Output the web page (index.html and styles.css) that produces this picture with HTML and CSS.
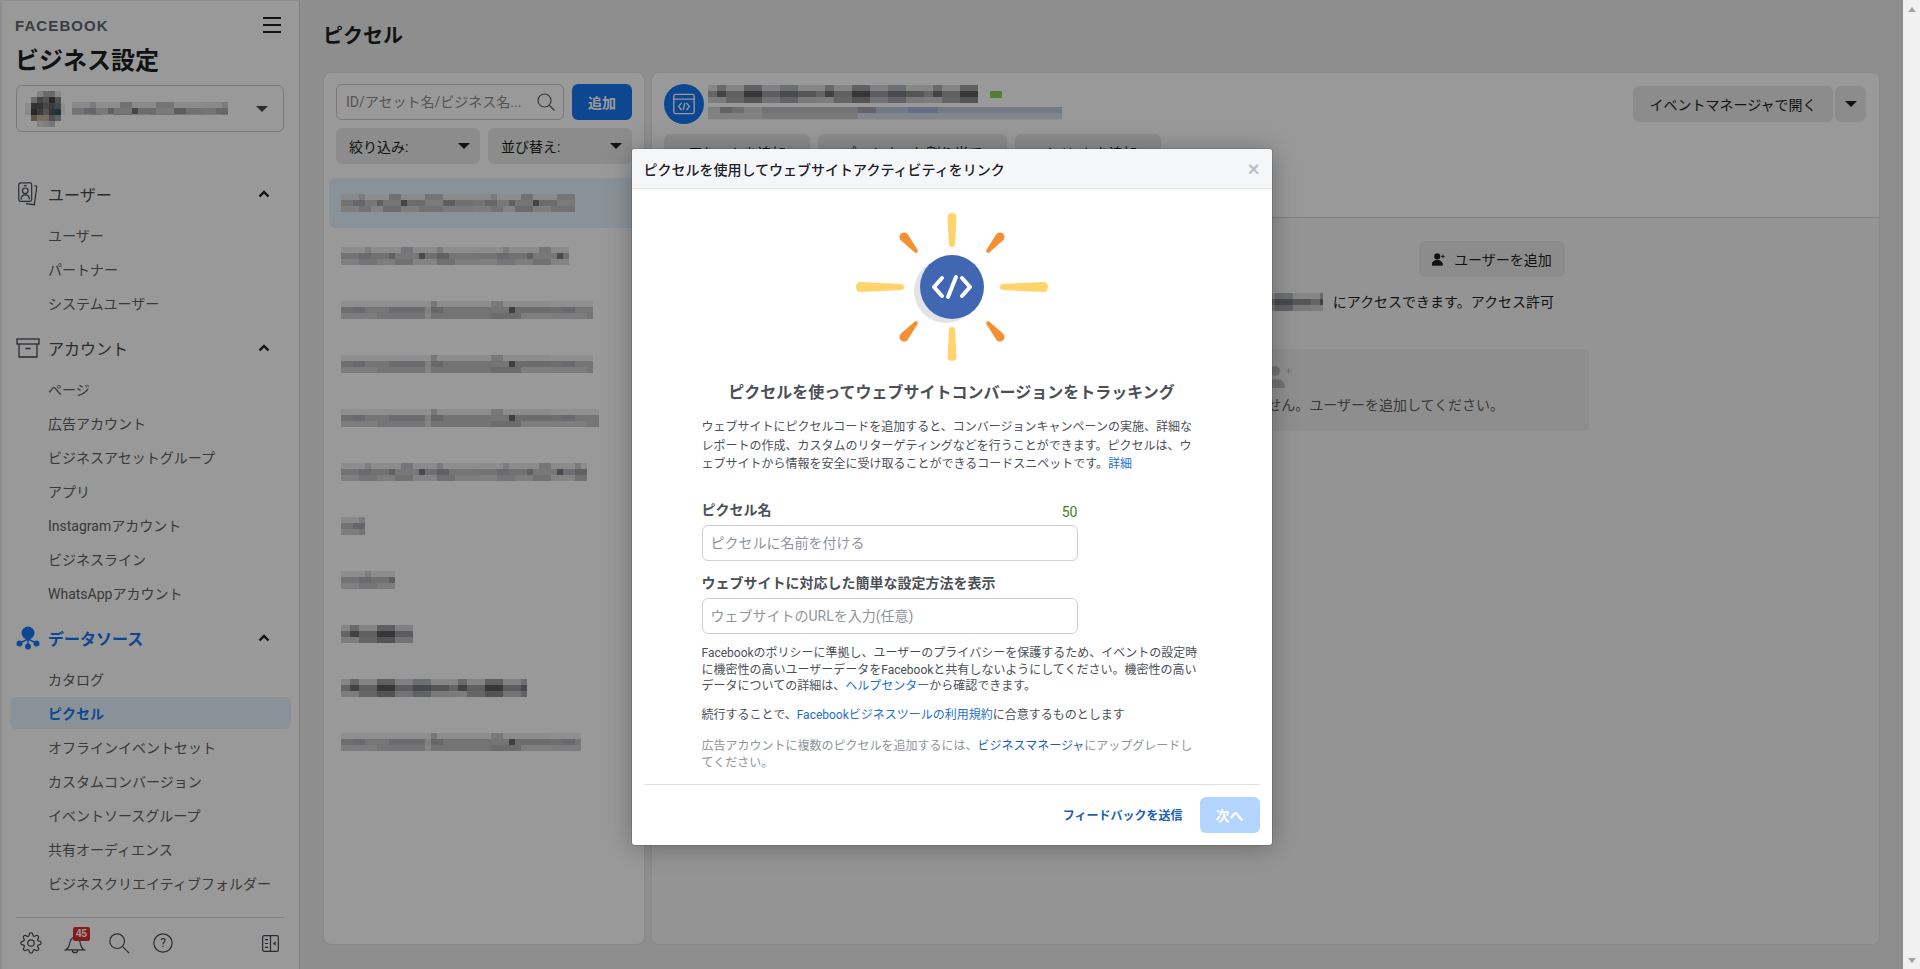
FILE: index.html
```html
<!DOCTYPE html>
<html lang="ja">
<head>
<meta charset="utf-8">
<title>ビジネス設定</title>
<link rel="stylesheet" href="styles.css">
</head>
<body>
<div class="viewport">
  <aside class="sidebar">
    <div class="brand-row">
      <span class="brand">FACEBOOK</span>
      <svg class="hamburger" viewBox="0 0 18 16"><path d="M0 1h18M0 8h18M0 15h18"/></svg>
    </div>
    <h1 class="side-title">ビジネス設定</h1>
    <div class="biz-select">
      <span class="avatar"></span>
      <span class="mosaic m1 short biz-name"></span>
      <span class="caret"></span>
    </div>
    <nav class="nav">
      <div class="nav-head">
        <svg class="nav-icon" viewBox="0 0 24 26"><g class="ln"><rect x="2" y="1" width="14" height="20" rx="2"/><path d="M19 4l2.500.6-2.600 20-9-1.200"/><circle cx="9" cy="9.500" r="3"/><path d="M4.500 19c0-3.500 2-5 4.500-5s4.500 1.500 4.500 5M7.500 4h3"/></g></svg>
        <span>ユーザー</span>
        <svg class="chev" viewBox="0 0 12 8"><path d="M1.500 6.500L6 2l4.500 4.500"/></svg>
      </div>
      <a class="nav-item">ユーザー</a>
      <a class="nav-item">パートナー</a>
      <a class="nav-item">システムユーザー</a>
      <div class="nav-head spaced">
        <svg class="nav-icon" viewBox="0 0 24 20"><g class="ln"><rect x="1" y="1" width="22" height="5"/><path d="M3 6v13h18V6M9.500 10.500h5"/></g></svg>
        <span>アカウント</span>
        <svg class="chev" viewBox="0 0 12 8"><path d="M1.500 6.500L6 2l4.500 4.500"/></svg>
      </div>
      <a class="nav-item">ページ</a>
      <a class="nav-item">広告アカウント</a>
      <a class="nav-item">ビジネスアセットグループ</a>
      <a class="nav-item">アプリ</a>
      <a class="nav-item">Instagramアカウント</a>
      <a class="nav-item">ビジネスライン</a>
      <a class="nav-item">WhatsAppアカウント</a>
      <div class="nav-head spaced active">
        <svg class="nav-icon" viewBox="0 0 24 24"><circle cx="12" cy="7" r="6.500" class="fb"/><path d="M12 12v8M12 13L4 17M12 13l8 4" class="fl"/><circle cx="3.500" cy="17.500" r="3" class="fb"/><circle cx="12" cy="20.500" r="3" class="fb"/><circle cx="20.500" cy="17.500" r="3" class="fb"/></svg>
        <span>データソース</span>
        <svg class="chev" viewBox="0 0 12 8"><path d="M1.500 6.500L6 2l4.500 4.500"/></svg>
      </div>
      <a class="nav-item">カタログ</a>
      <a class="nav-item current">ピクセル</a>
      <a class="nav-item">オフラインイベントセット</a>
      <a class="nav-item">カスタムコンバージョン</a>
      <a class="nav-item">イベントソースグループ</a>
      <a class="nav-item">共有オーディエンス</a>
      <a class="nav-item">ビジネスクリエイティブフォルダー</a>
    </nav>
    <div class="side-foot">
      <svg class="foot-icon" viewBox="0 0 24 24"><circle cx="12" cy="12" r="3.500" class="ln"/><path class="ln" d="M19.400 15a1.650 1.650 0 0 0 .33 1.820l.06.06a2 2 0 0 1 0 2.830 2 2 0 0 1-2.830 0l-.06-.06a1.650 1.650 0 0 0-1.820-.33 1.650 1.650 0 0 0-1 1.510V21a2 2 0 0 1-2 2 2 2 0 0 1-2-2v-.09A1.650 1.650 0 0 0 9 19.400a1.650 1.650 0 0 0-1.820.33l-.06.06a2 2 0 0 1-2.830 0 2 2 0 0 1 0-2.830l.06-.06a1.650 1.650 0 0 0 .33-1.820 1.650 1.650 0 0 0-1.510-1H3a2 2 0 0 1-2-2 2 2 0 0 1 2-2h.09A1.650 1.650 0 0 0 4.600 9a1.650 1.650 0 0 0-.33-1.820l-.06-.06a2 2 0 0 1 0-2.830 2 2 0 0 1 2.830 0l.06.06a1.650 1.650 0 0 0 1.820.33H9a1.650 1.650 0 0 0 1-1.510V3a2 2 0 0 1 2-2 2 2 0 0 1 2 2v.09a1.650 1.650 0 0 0 1 1.510 1.650 1.650 0 0 0 1.820-.33l.06-.06a2 2 0 0 1 2.830 0 2 2 0 0 1 0 2.830l-.06.06a1.650 1.650 0 0 0-.33 1.820V9a1.650 1.650 0 0 0 1.510 1H21a2 2 0 0 1 2 2 2 2 0 0 1-2 2h-.09a1.650 1.650 0 0 0-1.510 1z"/></svg>
      <span class="bell-wrap">
        <svg class="foot-icon" viewBox="0 0 24 24"><path class="ln" d="M2 19.500c2.500-1.500 3.500-3 4-6 .6-4 2.500-8 6-8s5.400 4 6 8c.5 3 1.500 4.500 4 6zM9 19.500c0 2 1.300 3 3 3s3-1 3-3"/></svg>
        <span class="badge">45</span>
      </span>
      <svg class="foot-icon" viewBox="0 0 24 24"><circle cx="10" cy="10" r="8" class="ln"/><path class="ln" d="M16 16l7 7"/></svg>
      <svg class="foot-icon" viewBox="0 0 24 24"><circle cx="12" cy="12" r="10" class="ln"/><text x="12" y="16.500" class="help-q">?</text></svg>
      <svg class="panel-icon" viewBox="0 0 18 18"><g class="ln"><rect x=".7" y=".7" width="16.600" height="16.600" rx="1.500"/><path d="M9 .7v16.600M3 5h3.500M3 9h3.500M3 13h3.500"/></g><path d="M14.500 6.500v5L11.500 9z" class="fd"/></svg>
    </div>
  </aside>

  <main class="main">
    <h2 class="page-title">ピクセル</h2>
    <div class="columns">
      <section class="list-card">
        <div class="tool-row">
          <div class="search">
            <input class="search-input" placeholder="ID/アセット名/ビジネス名...">
            <svg class="search-icon" viewBox="0 0 18 18"><circle cx="7.500" cy="7.500" r="6.500"/><path d="M12 12l5.500 5.500"/></svg>
          </div>
          <button class="btn-primary">追加</button>
        </div>
        <div class="tool-row">
          <div class="drop"><span>絞り込み:</span><i class="caret"></i></div>
          <div class="drop"><span>並び替え:</span><i class="caret"></i></div>
        </div>
        <ul class="asset-list">
          <li class="asset selected"><span class="mosaic m1 w234"></span></li>
          <li class="asset"><span class="mosaic m2 w228"></span></li>
          <li class="asset"><span class="mosaic m3 w252"></span></li>
          <li class="asset"><span class="mosaic m3 w252"></span></li>
          <li class="asset"><span class="mosaic m3 w258"></span></li>
          <li class="asset"><span class="mosaic m2 w246"></span></li>
          <li class="asset"><span class="mosaic m1 w24"></span></li>
          <li class="asset"><span class="mosaic m2 w54"></span></li>
          <li class="asset"><span class="mosaic m5 w72"></span></li>
          <li class="asset"><span class="mosaic m5 w186"></span></li>
          <li class="asset"><span class="mosaic m3 w240"></span></li>
        </ul>
      </section>

      <section class="detail-card">
        <header class="detail-head">
          <div class="head-top">
            <span class="pixel-circle">
              <svg viewBox="0 0 20 20"><rect x="1.500" y="2" width="17" height="16" rx="1.500"/><path d="M1.500 6h17M8 9l-2.500 3L8 15M12 9l2.500 3L12 15M10.800 9l-1.600 6"/></svg>
            </span>
            <div class="head-lines">
              <div class="head-line"><span class="mosaic m5 w270"></span><span class="dot"></span></div>
              <span class="mosaic m4 short w354"></span>
            </div>
            <div class="em-group">
              <button class="btn-gray em-open">イベントマネージャで開く</button>
              <button class="btn-gray em-more"><i class="caret"></i></button>
            </div>
          </div>
          <div class="head-actions">
            <button class="btn-gray act a1">アセットを追加</button>
            <button class="btn-gray act a2">パートナーと割り当て</button>
            <button class="btn-gray act a3">イベントを追加</button>
          </div>
        </header>
        <div class="detail-body">
          <div class="add-row">
            <button class="btn-gray add-user">
              <svg viewBox="0 0 16 16"><circle cx="6" cy="5" r="3.500"/><path d="M0 15c0-3.500 2.500-5.500 6-5.500s6 2 6 5.500zM12.500 3v4M10.500 5h4" class="plus"/></svg>
              <span>ユーザーを追加</span>
            </button>
          </div>
          <p class="access-row"><span class="mosaic m5 w120"></span><span>にアクセスできます。アクセス許可</span></p>
          <div class="empty-box">
            <svg class="empty-icon" viewBox="0 0 30 24"><circle cx="13" cy="6" r="5"/><path d="M3 23c0-6 3-9 10-9s10 3 10 9z"/><path class="plus" d="M24 6h5M26.500 3.500v5"/></svg>
            <p class="empty-text">まだこのピクセルにユーザーがいません。ユーザーを追加してください。</p>
          </div>
        </div>
      </section>
    </div>
  </main>

  <div class="overlay">
    <div class="modal">
      <div class="modal-head">
        <span>ピクセルを使用してウェブサイトアクティビティをリンク</span>
        <span class="close">×</span>
      </div>
      <div class="modal-body">
        <svg class="burst" viewBox="0 0 192 148">
          <path class="ray-y" d="M91.500 4c0-2.500 2-4 4.500-4s4.500 1.500 4.500 4L99 31c0 2-1 3-3 3s-3-1-3-3z"/>
          <path class="ray-y" d="M91.500 144c0 2.500 2 4 4.500 4s4.500-1.500 4.500-4L99 117c0-2-1-3-3-3s-3 1-3 3z"/>
          <path class="ray-y" d="M4 69c-2.500 0-4 2.500-4 5s1.500 5 4 5L45 77c2 0 3-1 3-3s-1-3-3-3z"/>
          <path class="ray-y" d="M188 69c2.500 0 4 2.500 4 5s-1.500 5-4 5L147 77c-2 0-3-1-3-3s1-3 3-3z"/>
          <path class="ray-o" d="M44.500 26.900A4.500 4.500 0 0 1 51.500 21.100L61.500 36.700A2 2 0 0 1 58.500 39.300z"/>
          <path class="ray-o" transform="matrix(-1 0 0 1 192 0)" d="M44.500 26.900A4.500 4.500 0 0 1 51.500 21.100L61.500 36.700A2 2 0 0 1 58.500 39.300z"/>
          <path class="ray-o" transform="matrix(1 0 0 -1 0 148)" d="M44.500 26.900A4.500 4.500 0 0 1 51.500 21.100L61.500 36.700A2 2 0 0 1 58.500 39.300z"/>
          <path class="ray-o" transform="matrix(-1 0 0 -1 192 148)" d="M44.500 26.900A4.500 4.500 0 0 1 51.500 21.100L61.500 36.700A2 2 0 0 1 58.500 39.300z"/>
          <circle cx="90" cy="78" r="32" class="disc-shade"/>
          <circle cx="96" cy="74" r="32" class="disc"/>
          <path class="code" d="M86 65L78 74l8 9M106 65l8 9-8 9M100 64l-8 20"/>
        </svg>
        <h3 class="modal-h">ピクセルを使ってウェブサイトコンバージョンをトラッキング</h3>
        <p class="intro">ウェブサイトにピクセルコードを追加すると、コンバージョンキャンペーンの実施、詳細な<br>レポートの作成、カスタムのリターゲティングなどを行うことができます。ピクセルは、ウ<br>ェブサイトから情報を安全に受け取ることができるコードスニペットです。<a class="link">詳細</a></p>
        <div class="label-row"><label>ピクセル名</label><span class="count">50</span></div>
        <input class="field" placeholder="ピクセルに名前を付ける">
        <div class="label-row second"><label>ウェブサイトに対応した簡単な設定方法を表示</label></div>
        <input class="field" placeholder="ウェブサイトのURLを入力(任意)">
        <p class="policy">Facebookのポリシーに準拠し、ユーザーのプライバシーを保護するため、イベントの設定時<br>に機密性の高いユーザーデータをFacebookと共有しないようにしてください。機密性の高い<br>データについての詳細は、<a class="link">ヘルプセンター</a>から確認できます。</p>
        <p class="agree">続行することで、<a class="link">Facebookビジネスツールの利用規約</a>に合意するものとします</p>
        <p class="muted">広告アカウントに複数のピクセルを追加するには、<a class="link dark">ビジネスマネージャ</a>にアップグレードし<br>てください。</p>
        <div class="modal-foot">
          <a class="feedback">フィードバックを送信</a>
          <button class="btn-next">次へ</button>
        </div>
      </div>
    </div>
  </div>
</div>
<div class="scrollbar">
  <span class="arrow up"></span>
  <span class="arrow down"></span>
</div>
</body>
</html>
```

FILE: styles.css
```css
* { box-sizing: border-box; }
html, body { margin: 0; height: 969px; overflow: hidden; }
body {
  display: flex;
  font-family: Roboto, "Noto Sans CJK JP", sans-serif;
  font-size: 14px;
  color: #1c1e21;
  background: #f1f1f1;
}
button, input { font-family: inherit; }
h1, h2, h3, p, ul { margin: 0; padding: 0; }
ul { list-style: none; }

.viewport {
  position: relative;
  flex: 1;
  display: flex;
  height: 969px;
  padding: 1px 0 0 2px;
  background: #ededed;
  overflow: hidden;
}
.scrollbar {
  width: 17px;
  height: 969px;
  background: #f1f1f1;
  display: flex;
  flex-direction: column;
  justify-content: space-between;
  align-items: center;
  padding: 7px 0 6px;
}
.arrow { width: 0; height: 0; border-left: 4px solid transparent; border-right: 4px solid transparent; }
.arrow.up { border-bottom: 5px solid #a3a3a3; }
.arrow.down { border-top: 5px solid #a3a3a3; }

/* sidebar */
.sidebar {
  width: 298px;
  flex: none;
  height: 968px;
  background: #fff;
  border-right: 1px solid #d8d8d8;
  padding: 0 15px 0 13px;
  display: flex;
  flex-direction: column;
}
.brand-row { display: flex; justify-content: space-between; align-items: center; height: 22px; margin-top: 13px; }
.brand { font-family: "Liberation Sans", sans-serif; font-size: 15px; font-weight: 700; letter-spacing: 1.100px; color: #606770; }
.hamburger { width: 18px; height: 16px; margin-right: 3px; fill: none; stroke: #1c1e21; stroke-width: 2; }
.side-title { font-size: 24px; font-weight: 700; line-height: 32px; margin-top: 9px; color: #1c1e21; }
.biz-select {
  height: 47px;
  margin: 8px 0 0 1px;
  border: 1px solid #ccc;
  border-radius: 6px;
  display: flex;
  align-items: center;
  padding: 0 15px 0 8px;
}
.avatar {
  width: 40px; height: 36px; flex: none;
  margin-right: 7px;
  background-repeat: no-repeat;
  background-size: 100% 6px;
  background-position: 0 0, 0 6px, 0 12px, 0 18px, 0 24px, 0 30px;
  background-image:
    linear-gradient(90deg, transparent 0 12px, #d8d8d8 12px 18px, #b0b0b0 18px 30px, #e4e4e4 30px 36px, transparent 36px),
    linear-gradient(90deg, transparent 0 6px, #b4b4b4 6px 12px, #777 12px 18px, #8a8a8a 18px 24px, #444 24px 30px, #888 30px 36px, transparent 36px),
    linear-gradient(90deg, #e8e8e8 0 6px, #555 6px 18px, #777 18px 24px, #666 24px 30px, #707a80 30px 36px, #eee 36px 40px),
    linear-gradient(90deg, #e4e4e4 0 6px, #444 6px 12px, #666 12px 18px, #8a8a8a 18px 24px, #555 24px 30px, #2f5560 30px 36px, #eee 36px 40px),
    linear-gradient(90deg, transparent 0 6px, #9a8c84 6px 12px, #c4b4a4 12px 24px, #808890 24px 30px, #a0a0a0 30px 36px, transparent 36px),
    linear-gradient(90deg, transparent 0 12px, #e0dcd8 12px 18px, #d4d4d8 18px 24px, #c0c8d0 24px 30px, transparent 30px);
}
.biz-name { width: 156px; }
.mosaic.short { height: 13px; }
.caret {
  display: inline-block;
  width: 0; height: 0;
  border-left: 6px solid transparent;
  border-right: 6px solid transparent;
  border-top: 6px solid #1c1e21;
}
.biz-select .caret { margin-left: auto; border-top-color: #444950; }

.nav { margin-top: 45px; display: flex; flex-direction: column; }
.nav-head {
  height: 34px;
  display: flex;
  align-items: center;
  font-size: 16px;
  color: #444950;
  margin-bottom: 7px;
  padding-left: 1px;
}
.nav-head.spaced { margin-top: 11px; }
.nav-icon { width: 24px; height: 24px; flex: none; margin-right: 8px; }
.chev { width: 12px; height: 8px; margin-left: auto; margin-right: 14px; fill: none; stroke: #1c1e21; stroke-width: 2.400; }
.nav-head.active { color: #1877f2; font-weight: 700; }
.nav-item {
  height: 34px;
  display: flex;
  align-items: center;
  padding-left: 33px;
  font-size: 14px;
  color: #606060;
}
.nav-item.current {
  margin: 1px -7px 1px -5px;
  height: 32px;
  padding-left: 38px;
  border-radius: 6px;
  background: #e7f3ff;
  color: #1877f2;
  font-weight: 700;
}
.ln { fill: none; stroke: #444950; stroke-width: 1.300; }
.fb { fill: #1877f2; }
.fl { fill: none; stroke: #1877f2; stroke-width: 1.500; }
.fd { fill: #444950; }

.side-foot {
  margin: 17px 0 0 1px;
  border-top: 1px solid #d8d8d8;
  padding: 14px 5px 0 4px;
  display: flex;
  align-items: center;
  gap: 22px;
}
.foot-icon { width: 22px; height: 22px; display: block; flex: none; }
.panel-icon { width: 17px; height: 17px; flex: none; display: block; margin-left: auto; }
.help-q { font-family: Roboto, sans-serif; font-size: 13px; fill: #444950; text-anchor: middle; }
.bell-wrap { position: relative; display: block; }
.badge {
  position: absolute;
  top: -5px; left: 9px;
  width: 17px; height: 14px;
  background: #e02b32;
  border-radius: 2px;
  color: #fff;
  font-family: "Liberation Sans", sans-serif;
  font-size: 10px;
  font-weight: 700;
  line-height: 14px;
  text-align: center;
}

/* mosaic placeholders */
.mosaic {
  display: block;
  height: 18px;
  flex: none;
  background-repeat: no-repeat;
  background-size: 100% 6px;
  background-position: 0 0, 0 6px, 0 12px;
}
.m1 { background-image:
  repeating-linear-gradient(90deg, #e4e4e4 0 18px, #cfcfd4 18px 24px, #ececec 24px 48px, #bcbcc0 48px 60px, #e6e6e6 60px 84px, #c4c4c4 84px 102px, #e8e8e8 102px 132px),
  repeating-linear-gradient(90deg, #c0c0c2 0 12px, #acacb2 12px 24px, #c8c8c8 24px 36px, #a0a0a6 36px 42px, #c4c4c4 42px 60px, #70737a 60px 66px, #b4b4b4 66px 84px, #cccccc 84px 102px, #9c9ca0 102px 114px, #bcbcc0 114px 132px),
  repeating-linear-gradient(90deg, #d0d0d0 0 18px, #c0c0c4 18px 30px, #dadada 30px 42px, #b4b4b8 42px 60px, #d0d0d0 60px 78px, #bcbcbc 78px 102px, #ccccd0 102px 132px);
}
.m2 { background-image:
  repeating-linear-gradient(90deg, #ececec 0 24px, #d0d0d0 24px 30px, #eaeaea 30px 60px, #c4c4ca 60px 72px, #e8e8e8 72px 96px, #cccccc 96px 102px, #ececec 102px 138px),
  repeating-linear-gradient(90deg, #c0c0c0 0 18px, #b0b0b8 18px 30px, #bcbcbc 30px 48px, #a0a0a8 48px 54px, #c8c8c8 54px 78px, #7c7e84 78px 84px, #b8b8c0 84px 96px, #a2a2a2 96px 108px, #c4c4c4 108px 138px),
  repeating-linear-gradient(90deg, #d4d4d4 0 18px, #c4c4c8 18px 36px, #d0d0d0 36px 54px, #bcbcbc 54px 72px, #dcdcdc 72px 96px, #bcbcc0 96px 114px, #d2d2d2 114px 138px);
}
.m3 { background-image:
  repeating-linear-gradient(90deg, #eeeeee 0 90px, #c6c6c6 90px 96px, #ececec 96px 150px, #c8c8c8 150px 162px, #eaeaea 162px 210px),
  repeating-linear-gradient(90deg, #b8b7b8 0 12px, #b0b0ba 12px 24px, #c4c4c4 24px 48px, #b4b4ba 48px 84px, #d8d8d8 84px 90px, #acacac 90px 102px, #c0c0c0 102px 150px, #c4c4c4 150px 168px, #68696e 168px 174px, #b4b4b4 174px 210px),
  repeating-linear-gradient(90deg, #d0d0d0 0 36px, #c4c4c8 36px 84px, #dcdcdc 84px 90px, #c0c0c0 90px 150px, #b4b4b4 150px 180px, #d2d2d2 180px 210px);
}
.m4 { background-image:
  repeating-linear-gradient(90deg, #d4d4d4 0 12px, #a6a6aa 12px 24px, #b8b8b8 24px 36px, #d6d6d6 36px 54px, #c0c0c4 54px 150px, #a6a6b0 150px 168px, #bcc8e0 168px 200px, #a8b8dc 200px 230px, #c0cce0 230px 354px),
  repeating-linear-gradient(90deg, #d8d8d8 0 54px, #cccccc 54px 150px, #d7deea 150px 354px),
  repeating-linear-gradient(90deg, #eee 0 354px);
}
.m5 { background-image:
  repeating-linear-gradient(90deg, #e0e0e0 0 9px, #b0b0b0 9px 18px, #dcdcdc 18px 36px, #a0a0a0 36px 54px, #d8d8dc 54px 72px, #b4b8bc 72px 90px, #e0e0e0 90px 108px),
  repeating-linear-gradient(90deg, #a8a8a8 0 9px, #707070 9px 18px, #a0a0a0 18px 36px, #5c5c60 36px 54px, #9c9ca0 54px 72px, #787c80 72px 90px, #909090 90px 108px),
  repeating-linear-gradient(90deg, #d0d0d0 0 18px, #a8a8a8 18px 36px, #8a8a8a 36px 54px, #c0c0c4 54px 72px, #a0a4a8 72px 90px, #cccccc 90px 108px);
}
.w24 { width: 24px; } .w54 { width: 54px; } .w72 { width: 72px; } .w120 { width: 120px; }
.w186 { width: 186px; } .w228 { width: 228px; } .w234 { width: 234px; } .w240 { width: 240px; }
.w246 { width: 246px; } .w252 { width: 252px; } .w258 { width: 258px; } .w270 { width: 270px; } .w354 { width: 354px; }

/* main */
.main { flex: 1; min-width: 0; padding: 0 23px; display: flex; flex-direction: column; }
.page-title { font-size: 20px; font-weight: 700; line-height: 28px; margin-top: 21px; color: #1c1e21; }
.columns { display: flex; gap: 6px; margin-top: 22px; height: 873px; }
.list-card, .detail-card { background: #fff; border-radius: 8px; border: 1px solid #e4e4e4; }
.list-card { width: 322px; flex: none; padding: 11px 12px; }
.tool-row { display: flex; gap: 8px; margin-bottom: 8px; }
.search { position: relative; width: 228px; height: 36px; flex: none; }
.search-input {
  width: 100%; height: 100%;
  border: 1px solid #cccccc;
  border-radius: 6px;
  padding: 0 36px 0 9px;
  font-size: 14px;
  background: #fff;
}
.search-input::placeholder { color: #8d8d8d; opacity: 1; }
.search-icon { position: absolute; right: 9px; top: 9px; width: 18px; height: 18px; fill: none; stroke: #606060; stroke-width: 1.200; }
.btn-primary {
  width: 60px; height: 36px;
  flex: none;
  border: 0;
  border-radius: 6px;
  background: #1877f2;
  color: #fff;
  font-size: 14px;
  font-weight: 700;
}
.drop {
  flex: 1;
  height: 36px;
  background: #e9e9e9;
  border-radius: 6px;
  display: flex;
  align-items: center;
  justify-content: space-between;
  padding: 0 10px 0 13px;
  color: #1c1e21;
  font-size: 14px;
}
.asset-list { margin: 14px -12px 0 -7px; }
.asset { height: 54px; display: flex; align-items: center; padding-left: 12px; }
.asset.selected { height: 50px; margin-bottom: 1px; background: #e7f3ff; border-radius: 6px 0 0 6px; }

.detail-card { flex: 1; min-width: 0; display: flex; flex-direction: column; overflow: hidden; }
.detail-head { height: 145px; flex: none; border-bottom: 1px solid #d8d8d8; padding: 11px 13px 0 12px; }
.head-top { display: flex; align-items: flex-start; }
.pixel-circle { width: 40px; height: 40px; flex: none; border-radius: 50%; background: #1877f2; display: flex; align-items: center; justify-content: center; }
.pixel-circle svg { width: 24px; height: 24px; fill: none; stroke: #fff; stroke-width: 1.100; }
.head-lines { margin: 1px 0 0 4px; display: flex; flex-direction: column; gap: 4px; }
.head-line { display: flex; align-items: center; gap: 12px; }
.dot { width: 12px; height: 7px; background: #8fd05a; }
.em-group { margin-left: auto; display: flex; gap: 2px; margin-top: 2px; }
.btn-gray { border: 0; border-radius: 6px; background: #e9e9e9; color: #1c1e21; font-size: 14px; height: 36px; }
.em-open { width: 200px; }
.em-more { width: 31px; display: flex; align-items: center; justify-content: center; padding: 0; }
.head-actions { display: flex; gap: 8px; margin-top: 10px; }
.act.a1 { width: 146px; } .act.a2 { width: 189px; } .act.a3 { width: 146px; }

.detail-body { flex: 1; background: #f7f7f7; padding: 23px 290px 0 0; display: flex; flex-direction: column; }
.add-row { display: flex; justify-content: flex-end; padding-right: 24px; }
.add-user { width: 146px; display: flex; align-items: center; justify-content: center; gap: 8px; padding: 0; }
.add-user svg { width: 14px; height: 14px; fill: #1c1e21; }
.plus { stroke: #1c1e21; stroke-width: 1; }
.access-row { display: flex; justify-content: flex-end; align-items: center; gap: 10px; padding-right: 35px; margin-top: 15px; line-height: 20px; color: #1c1e21; }
.empty-box {
  margin: 37px 0 0 auto;
  width: 630px;
  height: 82px;
  background: #ededed;
  border-radius: 4px;
  display: flex;
  flex-direction: column;
  align-items: center;
  padding-top: 16px;
}
.empty-icon { width: 30px; height: 24px; margin-left: 6px; fill: #bdbdbd; flex: none; }
.empty-icon .plus { stroke: #bdbdbd; fill: none; }
.empty-text { margin-top: 6px; color: #606060; line-height: 20px; white-space: nowrap; }

/* modal */
.overlay {
  position: absolute;
  inset: 0;
  background: rgba(0, 0, 0, .4);
  display: flex;
  justify-content: center;
  align-items: flex-start;
  padding-top: 149px;
}
.modal {
  width: 640px;
  height: 696px;
  background: #fff;
  border-radius: 3px;
  box-shadow: 0 2px 26px rgba(0, 0, 0, .3), 0 0 0 1px rgba(0, 0, 0, .1);
  display: flex;
  flex-direction: column;
}
.modal-head {
  height: 40px;
  flex: none;
  background: #f5f6f7;
  border-bottom: 1px solid #e5e5e5;
  border-radius: 3px 3px 0 0;
  display: flex;
  align-items: center;
  justify-content: space-between;
  padding: 0 12px;
  font-size: 14px;
  font-weight: 500;
  color: #1d2129;
}
.close { color: #bcc0c4; font-size: 20px; line-height: 1; font-family: "Liberation Sans", sans-serif; font-weight: 700; }
.modal-body { flex: 1; padding: 24px 12px 0; display: flex; flex-direction: column; }
.burst { width: 192px; height: 148px; align-self: center; flex: none; }
.ray-y { fill: #ffd56b; }
.ray-o { fill: #f58f35; }
.disc-shade { fill: #e1e3e8; }
.disc { fill: #4267b2; }
.code { fill: none; stroke: #fff; stroke-width: 4; stroke-linecap: round; stroke-linejoin: round; }
.modal-h { font-size: 16px; font-weight: 700; line-height: 24px; text-align: center; margin-top: 20px; color: #4b4f56; }
.intro, .policy, .agree, .muted, .label-row, .field { margin-left: 58px; }
.intro { margin-top: 13px; font-size: 12px; line-height: 18.500px; color: #4b4f56; white-space: nowrap; }
.link { color: #2470c8; }
.link.dark { color: #1c5fb4; }
.label-row { display: flex; justify-content: space-between; width: 376px; margin-top: 26.500px; height: 20px; align-items: center; flex: none; }
.label-row.second { margin-top: 12px; }
.label-row label { font-size: 14px; font-weight: 700; color: #4b4f56; line-height: 20px; }
.count { font-size: 14px; color: #4f7a1c; position: relative; top: 2px; }
.field {
  width: 376px;
  height: 36px;
  flex: none;
  margin-top: 5px;
  border: 1px solid #ccd0d5;
  border-radius: 6px;
  padding: 0 8px;
  font-size: 14px;
  background: #fff;
}
.field::placeholder { color: #90949c; opacity: 1; }
.policy { margin-top: 11px; font-size: 12px; line-height: 16.500px; color: #4b4f56; white-space: nowrap; }
.agree { margin-top: 12px; font-size: 12px; line-height: 17px; color: #4b4f56; white-space: nowrap; }
.muted { margin-top: 14px; font-size: 12px; line-height: 17px; color: #90949c; white-space: nowrap; }
.modal-foot {
  margin-top: 12px;
  border-top: 1px solid #dddfe2;
  padding-top: 12px;
  display: flex;
  justify-content: flex-end;
  align-items: center;
  gap: 17px;
}
.feedback { font-size: 12px; font-weight: 700; color: #1c5fb4; }
.btn-next {
  width: 60px; height: 36px;
  border: 0;
  border-radius: 6px;
  background: #b3d4fc;
  color: #fff;
  font-size: 14px;
  font-weight: 700;
}
```
